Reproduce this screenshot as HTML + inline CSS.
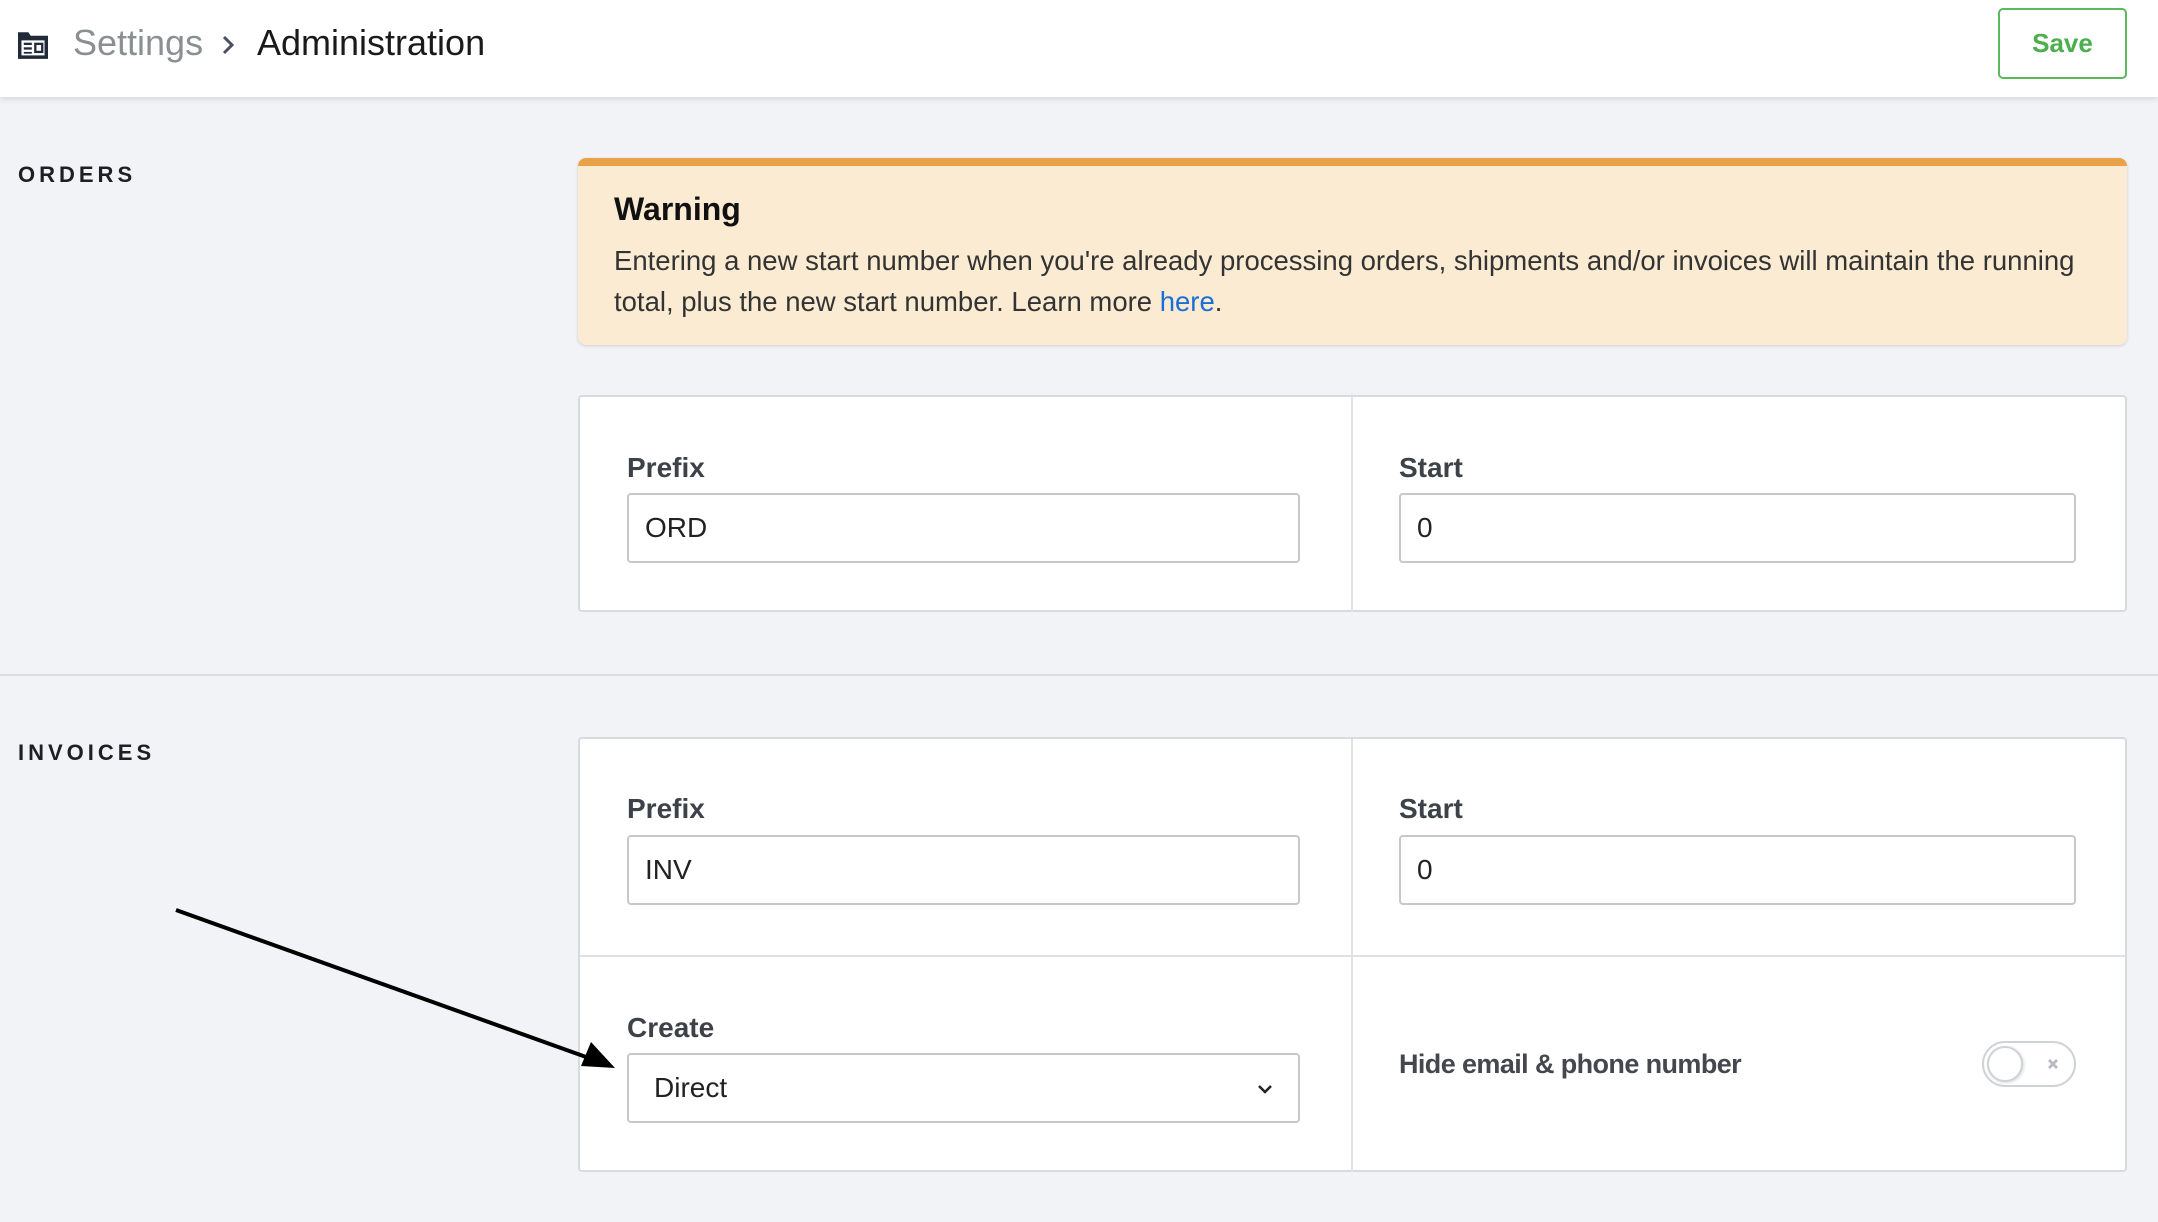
<!DOCTYPE html>
<html><head><meta charset="utf-8"><style>
*{box-sizing:border-box;margin:0;padding:0}
body{width:2158px;height:1222px;background:#f2f3f7;font-family:"Liberation Sans",sans-serif;position:relative;overflow:hidden;color:#222}
.hdr{position:absolute;left:0;top:0;width:2158px;height:97px;background:#fff;box-shadow:0 2px 6px rgba(0,0,0,.12)}
.abs{position:absolute}
.lbl{position:absolute;font-size:22px;font-weight:bold;letter-spacing:4px;color:#1d1f24}
.card{position:absolute;background:#fff;border:2px solid #d8dade;border-radius:4px}
.fl{position:absolute;font-size:28px;font-weight:bold;color:#3d4148}
.inp{position:absolute;border:2px solid #c6c8cc;border-radius:4px;background:#fff;font-size:28px;color:#222;padding-left:16px;display:flex;align-items:center}
</style></head><body>
<div class="hdr">
<svg class="abs" style="left:16px;top:30px" width="34" height="30" viewBox="0 0 28 26"><path d="M1 2h9l2 3h15v20H1z" fill="#222a3a" /><rect x="4" y="9" width="20" height="13" fill="#fff"/><rect x="6" y="11" width="7" height="2" fill="#222a3a"/><rect x="6" y="15" width="7" height="2" fill="#222a3a"/><rect x="6" y="19" width="7" height="1.5" fill="#222a3a"/><rect x="15" y="11" width="8" height="9" fill="#222a3a"/><rect x="17" y="13" width="4" height="5" fill="#fff"/></svg>
<div class="abs" style="left:73px;top:22px;font-size:36px;color:#8a8f93">Settings</div>
<svg class="abs" style="left:220px;top:34px" width="16" height="22" viewBox="0 0 16 22"><path d="M4 3l8 8-8 8" stroke="#4a5060" stroke-width="3" fill="none"/></svg>
<div class="abs" style="left:257px;top:22px;font-size:36px;color:#1a1a1a">Administration</div>
<div class="abs" style="left:1998px;top:8px;width:129px;height:71px;border:2px solid #5cb85c;border-radius:5px;color:#4cae4c;font-size:26px;font-weight:bold;display:flex;align-items:center;justify-content:center">Save</div>
</div>

<div class="lbl" style="left:18px;top:162px">ORDERS</div>
<div class="abs" style="left:578px;top:158px;width:1549px;height:187px;background:#faebd2;border-top:8px solid #e9a247;border-radius:8px;box-shadow:0 1px 3px rgba(0,0,0,.15)">
<div class="abs" style="left:36px;top:25px;font-size:32px;font-weight:bold;color:#111">Warning</div>
<div class="abs" style="left:36px;top:74px;width:1500px;font-size:27.5px;line-height:41px;color:#333">Entering a new start number when you're already processing orders, shipments and/or invoices will maintain the running total, plus the new start number. Learn more <span style="color:#1a6ed8">here</span>.</div>
</div>

<div class="card" style="left:578px;top:395px;width:1549px;height:217px">
<div class="abs" style="left:771px;top:0;width:2px;height:215px;background:#e0e1e4"></div>
</div>
<div class="fl" style="left:627px;top:452px">Prefix</div>
<div class="inp" style="left:627px;top:493px;width:673px;height:70px">ORD</div>
<div class="fl" style="left:1399px;top:452px">Start</div>
<div class="inp" style="left:1399px;top:493px;width:677px;height:70px">0</div>

<div class="abs" style="left:0;top:674px;width:2158px;height:2px;background:#dcdde1"></div>

<div class="lbl" style="left:18px;top:740px">INVOICES</div>
<div class="card" style="left:578px;top:737px;width:1549px;height:435px">
<div class="abs" style="left:771px;top:0;width:2px;height:433px;background:#e0e1e4"></div>
<div class="abs" style="left:0;top:216px;width:1545px;height:2px;background:#e0e1e4"></div>
</div>
<div class="fl" style="left:627px;top:793px">Prefix</div>
<div class="inp" style="left:627px;top:835px;width:673px;height:70px">INV</div>
<div class="fl" style="left:1399px;top:793px">Start</div>
<div class="inp" style="left:1399px;top:835px;width:677px;height:70px">0</div>
<div class="fl" style="left:627px;top:1012px">Create</div>
<div class="inp" style="left:627px;top:1053px;width:673px;height:70px;padding-left:25px">Direct
<svg class="abs" style="left:627px;top:27px" width="18" height="14" viewBox="0 0 18 14"><path d="M3 4l6 6 6-6" stroke="#222" stroke-width="2.5" fill="none"/></svg></div>
<div class="fl" style="left:1399px;top:1049px;color:#44484e;font-size:27px;letter-spacing:-0.6px">Hide email &amp; phone number</div>
<div class="abs" style="left:1982px;top:1041px;width:94px;height:46px;border:2px solid #cfd2d6;border-radius:23px;background:#fff">
<div class="abs" style="left:3px;top:3px;width:36px;height:36px;border-radius:50%;border:2px solid #cfd2d6;box-shadow:1px 1px 3px rgba(0,0,0,.15);background:#fff"></div>
<svg class="abs" style="left:63px;top:15px" width="12" height="12" viewBox="0 0 12 12"><path d="M2 2l8 8M10 2l-8 8" stroke="#b8bcc0" stroke-width="3"/></svg>
</div>

<svg class="abs" style="left:0;top:0" width="2158" height="1222"><line x1="176" y1="910" x2="600" y2="1062" stroke="#000" stroke-width="4"/><path d="M615 1068l-34-2 10-24z" fill="#000"/></svg>
</body></html>
